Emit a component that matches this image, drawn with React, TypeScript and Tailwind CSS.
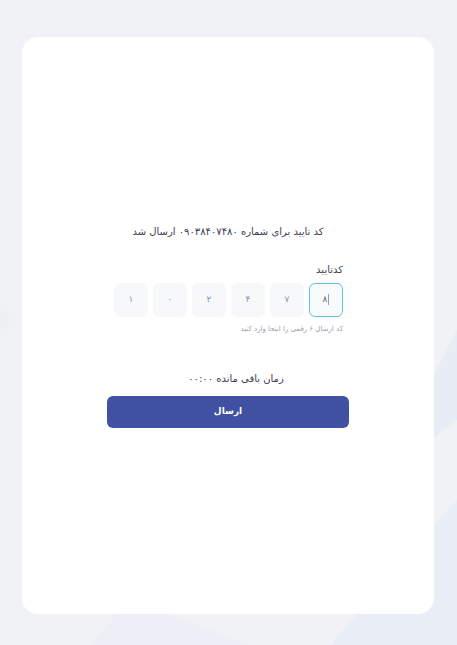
const digits = ["۸", "۷", "۴", "۲", "۰", "۱"];

function Backdrop() {
  return (
    <svg className="absolute inset-0 h-full w-full" viewBox="0 0 457 645" preserveAspectRatio="none" aria-hidden>
      <polygon points="457,330 457,420 380,480" fill="#e8edf5" />
      <polygon points="457,500 457,645 330,645" fill="#e9edf5" />
      <polygon points="90,645 130,600 250,645" fill="#eceff5" />
      <polygon points="0,300 20,320 0,340" fill="#eef0f4" />
    </svg>
  );
}

export default function App() {
  return (
    <div
      dir="rtl"
      className="relative min-h-[645px] w-full overflow-hidden bg-[#f1f2f5] pr-[23px] pl-[22px] pt-[37px] pb-[31px] font-['DejaVu_Sans',sans-serif]"
    >
      <Backdrop />
      <div className="relative flex h-[577px] items-center justify-center rounded-2xl bg-white">
        <div className="flex w-[242px] flex-col">
          <p className="text-center text-[10px] leading-4 text-[#3b3d4f]">
            کد تایید برای شماره ۰۹۰۳۸۴۰۷۴۸۰ ارسال شد
          </p>

          <label className="mt-[22px] px-[6px] text-[10px] leading-4 text-[#3b3d4f]">کدتایید</label>
          <div className="mt-[5px] flex gap-[5px] px-[6px]">
            {digits.map((d, i) => (
              <div
                key={i}
                className={
                  i === 0
                    ? "flex h-[34px] w-[34px] items-center justify-center rounded-md border border-[#5cc3dc] bg-[#f8fafc] text-[9px] text-[#555a70]"
                    : "flex h-[34px] w-[34px] items-center justify-center rounded-md bg-[#f6f8fa] text-[9px] text-[#8e96a8]"
                }
              >
                {i === 0 && <span className="ml-[1px] h-[11px] w-px bg-[#9aa0ae]" />}
                {d}
              </div>
            ))}
          </div>
          <p className="mt-[6px] px-[6px] text-[7px] leading-3 text-[#9a9eac]">کد ارسال ۶ رقمی را اینجا وارد کنید</p>

          <p className="mt-[36px] pl-4 text-center text-[10px] leading-4 text-[#3b3d4f]">زمان باقی مانده ۰۰:۰۰</p>
          <button className="mt-[9px] h-[32px] w-full rounded-md bg-[#3f51a0] text-[9px] font-bold text-white">
            ارسال
          </button>
        </div>
      </div>
    </div>
  );
}
